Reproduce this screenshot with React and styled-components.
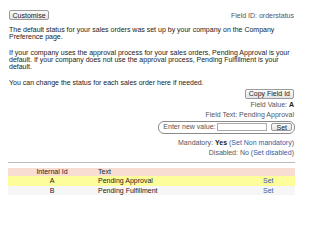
import React from 'react';
import styled, { createGlobalStyle } from 'styled-components';

const GlobalStyle = createGlobalStyle`
  html, body {
    margin: 0;
    padding: 0;
    background: #fff;
  }
  body {
    font-family: "Liberation Sans", Arial, sans-serif;
    font-size: 7px;
    color: #222;
  }
  * {
    box-sizing: border-box;
  }
`;

const Page = styled.div`
  padding: 10px 5px 0 8px;
  width: 300px;
`;

const TopBar = styled.div`
  display: flex;
  justify-content: space-between;
  align-items: center;
  padding: 0 1px 0 1px;
`;

const Button = styled.button`
  font-family: inherit;
  font-size: 7px;
  color: #222;
  height: ${(p) => p.$h || 10}px;
  padding: 0 ${(p) => p.$pad || 2.5}px;
  margin: 0;
  border: 1px solid #9a9a9a;
  border-radius: 2px;
  background: linear-gradient(#fbfbfb, #e4e4e4);
  line-height: 1;
`;

const FieldId = styled.span`
  color: #555;
`;

const Para = styled.p`
  margin: ${(p) => (p.$first ? 6 : 9)}px 0 0 1px;
  line-height: 7px;
  color: #222;
`;

const Side = styled.div`
  display: flex;
  flex-direction: column;
  align-items: flex-end;
  gap: 2px;
  margin-top: 3px;
  padding-right: 1px;
  line-height: 8px;
`;

const Info = styled.div`
  color: #555;
  margin-top: ${(p) => p.$top || 0}px;
`;

const Strong = styled.b`
  color: #222;
`;

const Link = styled.a`
  color: #2d5ea8;
  text-decoration: none;
`;

const Pill = styled.div`
  display: flex;
  align-items: center;
  height: 13px;
  margin-right: -1px;
  padding: 0 2px 0 4px;
  border: 1px solid #8a8a8a;
  border-radius: 6px;
  color: #555;
`;

const Input = styled.span`
  display: block;
  width: 50px;
  height: 7.5px;
  margin: 0 4px 0 2px;
  border: 1px solid #aaa;
  background: #fff;
`;

const Rule = styled.div`
  height: 1px;
  background: #bbb;
  margin-top: 5px;
`;

const Table = styled.div`
  margin-top: 5px;
`;

const Row = styled.div`
  display: grid;
  grid-template-columns: 88px 167px 1fr;
  align-items: center;
  height: ${(p) => p.$h}px;
  background: ${(p) => p.$bg};
`;

const IdCell = styled.div`
  text-align: center;
`;

const TextCell = styled.div`
  padding-left: 2px;
`;

const rows = [
  { id: 'A', text: 'Pending Approval', bg: '#fefd9b' },
  { id: 'B', text: 'Pending Fulfillment', bg: '#f6f6f6' },
];

export default function App() {
  return (
    <Page>
      <GlobalStyle />
      <TopBar>
        <Button>Customise</Button>
        <FieldId>Field ID: orderstatus</FieldId>
      </TopBar>
      <Para $first>
        The default status for your sales orders was set up by your company on the Company
        Preference page.
      </Para>
      <Para>
        If your company uses the approval process for your sales orders, Pending Approval is your
        default. If your company does not use the approval process, Pending Fulfillment is your
        default.
      </Para>
      <Para>You can change the status for each sales order here if needed.</Para>
      <Side>
        <Button $pad={3} $h={9.5}>Copy Field Id</Button>
        <Info>
          Field Value: <Strong>A</Strong>
        </Info>
        <Info>Field Text: Pending Approval</Info>
        <Pill>
          Enter new value:
          <Input />
          <Button $pad={4} $h={7.5}>Set</Button>
        </Pill>
        <Info $top={3}>
          Mandatory: <Strong>Yes</Strong> (<Link>Set Non mandatory</Link>)
        </Info>
        <Info>
          Disabled: No (<Link>Set disabled</Link>)
        </Info>
      </Side>
      <Rule />
      <Table>
        <Row $bg="#f8ddd3" $h={8.5}>
          <IdCell>Internal Id</IdCell>
          <TextCell>Text</TextCell>
          <div />
        </Row>
        {rows.map((r) => (
          <Row key={r.id} $bg={r.bg} $h={9.5}>
            <IdCell>{r.id}</IdCell>
            <TextCell>{r.text}</TextCell>
            <Link>Set</Link>
          </Row>
        ))}
      </Table>
    </Page>
  );
}
